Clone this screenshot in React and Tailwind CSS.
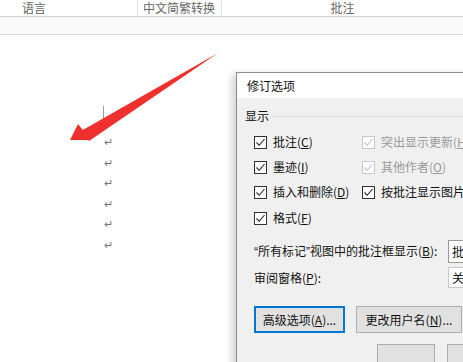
import React from "react";

const font = { fontFamily: '"Noto Sans CJK SC", "Microsoft YaHei", sans-serif' };
const latin = { fontFamily: '"Liberation Sans", Arial, sans-serif' };

function Check({ disabled }) {
  return (
    <span
      className={`w-[13px] h-[13px] border bg-white flex items-center justify-center shrink-0 ${
        disabled ? "border-[#c8c8c8]" : "border-[#333]"
      }`}
    >
      <svg width="11" height="11" viewBox="0 0 11 11">
        <path
          d="M1.5 5.5 L4.2 8.3 L9.5 2"
          fill="none"
          stroke={disabled ? "#c0c0c0" : "#222"}
          strokeWidth="1.1"
        />
      </svg>
    </span>
  );
}

function Opt({ label, disabled, w }) {
  return (
    <div className={`flex items-center gap-[6px] ${w || ""}`}>
      <Check disabled={disabled} />
      <span className={`whitespace-nowrap ${disabled ? "text-[#9a9a9a]" : "text-[#111]"}`}>{label}</span>
    </div>
  );
}

export default function App() {
  return (
    <div
      className="relative w-[463px] h-[362px] overflow-hidden bg-white text-[12px] leading-none"
      style={font}
    >
      {/* header */}
      <div className="flex h-[17px] border-b border-[#d4d4d4] text-[#666] text-[12px]">
        <div className="w-[137px] pl-[22px] flex items-center">语言</div>
        <div className="w-[85px] border-l border-r border-[#e2e2e2] pl-[5px] flex items-center">中文简繁转换</div>
        <div className="flex-1 flex items-center justify-center">批注</div>
      </div>
      <div className="h-[18px] bg-[#fafafa] border-b border-[#d6d6d6]" />

      {/* document */}
      <div className="relative">
        <div className="absolute left-[95px] top-[71px] w-[9px] h-[24px] border-r border-b border-[#9a9a9a]" />
        <div className="absolute left-[104px] top-[99px] flex flex-col gap-[6.5px] text-[#777] text-[11px]">
          {[0, 1, 2, 3, 4, 5].map((i) => (
            <span key={i} className="h-[14px] leading-[14px]">↵</span>
          ))}
        </div>
      </div>

      {/* arrow */}
      <svg className="absolute left-0 top-0" width="463" height="362" viewBox="0 0 463 362">
        <path d="M81 131 L218 53 L89 141 Z" fill="#f0302e" />
        <path d="M70 140 L78 124 L91 140 Z" fill="#f0302e" />
      </svg>

      {/* dialog */}
      <div className="absolute left-[236px] top-[72px] w-[270px] h-[300px] border border-[#8a8a8a] bg-[#f0f0f0] shadow-[-4px_2px_8px_rgba(0,0,0,0.18)] flex flex-col">
        <div className="h-[31px] bg-white flex items-center pl-[10px] text-[#111]">修订选项</div>
        <div className="flex flex-col pl-[8px] pt-[10px]">
          <div className="flex items-center gap-[4px] h-[16px]">
            <span className="text-[#111]">显示</span>
            <div className="flex-1 h-px bg-[#dcdcdc]" />
          </div>
          <div className="flex flex-col pl-[9px] pt-[11px] gap-[11px]">
            <div className="flex items-center h-[14px]">
              <Opt label={<>批注(<u>C</u>)</>} w="w-[108px]" />
              <Opt label={<>突出显示更新(<u>H</u>)</>} disabled />
            </div>
            <div className="flex items-center h-[14px]">
              <Opt label={<>墨迹(<u>I</u>)</>} w="w-[108px]" />
              <Opt label={<>其他作者(<u>O</u>)</>} disabled />
            </div>
            <div className="flex items-center h-[14px]">
              <Opt label={<>插入和删除(<u>D</u>)</>} w="w-[108px]" />
              <Opt label="按批注显示图片" />
            </div>
            <div className="flex items-center h-[14px] mt-[1px]">
              <Opt label={<>格式(<u>F</u>)</>} w="w-[108px]" />
            </div>
          </div>
          <div className="flex flex-col pl-[9px] pt-[15px] text-[#111]">
            <div className="flex items-center h-[23px]">
              <span className="w-[194px] whitespace-nowrap">
                <span style={latin}>“</span>所有标记<span style={latin}>”</span>视图中的批注框显示(<u>B</u>):
              </span>
              <div className="h-[23px] w-[40px] bg-white border border-[#9a9a9a] flex items-center pl-[3px] whitespace-nowrap overflow-hidden">批注框</div>
            </div>
            <div className="flex items-center h-[21px] mt-[4px]">
              <span className="w-[194px] whitespace-nowrap">审阅窗格(<u>P</u>):</span>
              <div className="h-[21px] w-[40px] bg-white border border-[#c8c8c8] flex items-center pl-[3px] whitespace-nowrap overflow-hidden">关闭</div>
            </div>
            <div className="flex items-center gap-[11px] mt-[18px]">
              <div className="w-[91px] h-[27px] bg-[#e1e1e1] border-2 border-[#0078d7] flex items-center justify-center whitespace-nowrap">
                高级选项(<u>A</u>)...
              </div>
              <div className="w-[106px] h-[27px] bg-[#e1e1e1] border border-[#adadad] flex items-center justify-center whitespace-nowrap">
                更改用户名(<u>N</u>)...
              </div>
            </div>
            <div className="flex items-start gap-[12px] mt-[11px] pl-[123px]">
              <div className="w-[72px] h-[27px] bg-[#e1e1e1] border border-[#adadad]" />
              <div className="w-[72px] h-[27px] bg-[#e1e1e1] border border-[#adadad]" />
            </div>
          </div>
        </div>
      </div>
    </div>
  );
}
